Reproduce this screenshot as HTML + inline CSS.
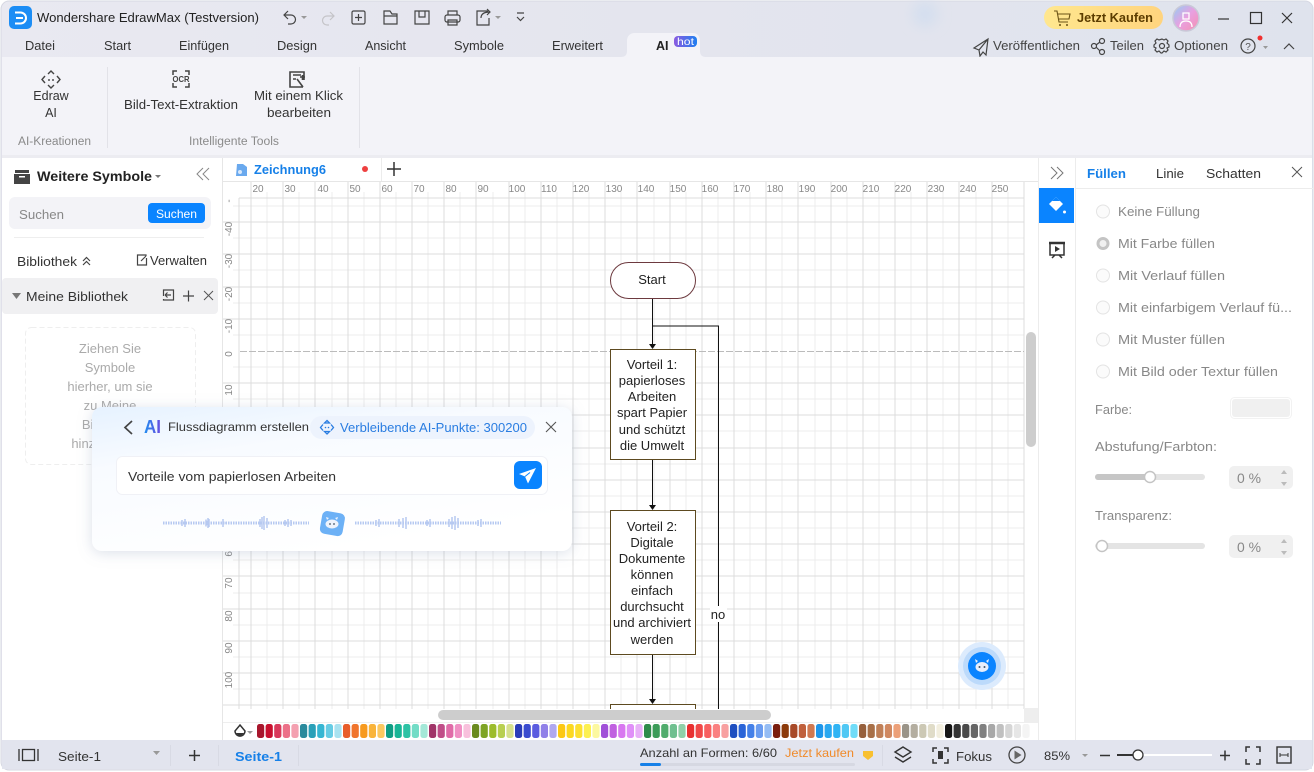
<!DOCTYPE html>
<html lang="de"><head><meta charset="utf-8"><title>Wondershare EdrawMax</title>
<style>
html,body{margin:0;padding:0;background:#fff;width:1314px;height:772px;overflow:hidden}
svg{display:block;font-family:"Liberation Sans",sans-serif}
.i{fill:none;stroke:#444;stroke-width:1.2}
.g{fill:#888}
.c{text-anchor:middle}
#pal rect{rx:2.5px;width:7.2px}
</style></head><body>
<svg width="1314" height="772" viewBox="0 0 1314 772" xmlns="http://www.w3.org/2000/svg">
<defs>
<linearGradient id="tb" x1="0" y1="0" x2="1" y2="0"><stop offset="0" stop-color="#e9e9f1"/><stop offset=".5" stop-color="#e4e5ee"/><stop offset="1" stop-color="#dfe3ed"/></linearGradient>
<linearGradient id="buy" x1="0" y1="0" x2="1" y2="0"><stop offset="0" stop-color="#ffe78f"/><stop offset="1" stop-color="#ffd47e"/></linearGradient>
<linearGradient id="hot" x1="0" y1="0" x2="1" y2="0"><stop offset="0" stop-color="#8b5be0"/><stop offset="1" stop-color="#1f7ff0"/></linearGradient>
<linearGradient id="av" x1="0" y1="0" x2="1" y2="1"><stop offset="0" stop-color="#8fd0f5"/><stop offset=".5" stop-color="#e8a0e0"/><stop offset="1" stop-color="#f590b0"/></linearGradient>
<linearGradient id="dlg" x1="0" y1="0" x2=".5" y2="1"><stop offset="0" stop-color="#e6f2ff"/><stop offset=".35" stop-color="#f8fbff"/><stop offset="1" stop-color="#ffffff"/></linearGradient>
<linearGradient id="ai" x1="0" y1="0" x2="1" y2="0"><stop offset="0" stop-color="#1f8ff0"/><stop offset="1" stop-color="#6a4be0"/></linearGradient>
<filter id="sh" x="-10%" y="-20%" width="120%" height="140%"><feDropShadow dx="0" dy="2" stdDeviation="7" flood-color="#8090b0" flood-opacity=".28"/></filter>
<filter id="bl" x="-100%" y="-100%" width="300%" height="300%"><feGaussianBlur stdDeviation="6"/></filter>
</defs>

<!-- window -->
<rect width="1314" height="772" fill="#fff"/>
<rect x="1" y="1" width="1312" height="769" rx="8" fill="url(#tb)" stroke="#d6d8e2"/>
<ellipse cx="925" cy="14" rx="13" ry="13" fill="#d5dfef" filter="url(#bl)"/>

<!-- title bar -->
<rect x="9" y="6" width="23" height="23" rx="5" fill="#1c8df5"/>
<path d="M15 12.500h5.500a5.500 5.500 0 0 1 0 11H15M16 18h7" fill="none" stroke="#fff" stroke-width="2"/>
<text x="37" y="22" font-size="13" fill="#222" textLength="222" lengthAdjust="spacingAndGlyphs">Wondershare EdrawMax (Testversion)</text>
<path class="i" d="M288 11l-4 4 4 4M284 15h7a4.500 4.500 0 0 1 0 9h-3"/>
<path d="M301 16h6l-3 3z" fill="#999"/>
<path class="i" style="stroke:#c4c4c8" d="M330 12l4 4-4 4M334 16h-7a4.500 4.500 0 0 0 0 9h2" />
<rect class="i" x="352" y="11" width="13" height="13" rx="1.500"/><path class="i" d="M358.500 14v7M355 17.500h7"/>
<path class="i" d="M384 24V11h6l2 3h5v10zM384 16h13" />
<path class="i" d="M415 11h14v13h-14zM419 11v6h6v-6"/>
<rect class="i" x="445" y="15" width="15" height="7" rx="2"/><path class="i" d="M448 15v-4h9v4M448 20h9v5h-9z"/>
<path class="i" d="M488 11h-11v14h12v-7M481 18c0-4 3-6 9-6M487 9l3 3-3 3"/>
<path d="M495 16h6l-3 3z" fill="#999"/>
<path class="i" d="M517 13h7M517 17l3.500 3.500 3.500-3.500" />

<rect x="1044" y="6" width="119" height="23" rx="11.500" fill="url(#buy)"/>
<path d="M1054 11h3l2 11h9M1058 14h12l-1 5h-10" fill="none" stroke="#6b5316" stroke-width="1.100"/><circle cx="1060" cy="25" r="1" fill="#6b5316"/><circle cx="1067" cy="25" r="1" fill="#6b5316"/>
<text x="1077" y="22" font-size="12.500" font-weight="700" fill="#5c3d00" textLength="76" lengthAdjust="spacingAndGlyphs">Jetzt Kaufen</text>
<circle cx="1186" cy="18" r="13" fill="url(#av)" stroke="#c9c9d8" stroke-width="1.500"/>
<path d="M1183 13h6v6h-6zM1180 27c0-5 3-6 6-6s6 1 6 6" fill="none" stroke="#fff" stroke-width="1.300"/>
<path d="M1218 19h11" stroke="#333" stroke-width="1.200"/>
<rect x="1250.500" y="12.500" width="11" height="11" fill="none" stroke="#333" stroke-width="1.200"/>
<path d="M1282 13l10 10M1292 13l-10 10" stroke="#333" stroke-width="1.200"/>

<!-- menu -->
<g font-size="12.500" fill="#333">
<text x="25" y="50" textLength="30" lengthAdjust="spacingAndGlyphs">Datei</text>
<text x="104" y="50" textLength="27" lengthAdjust="spacingAndGlyphs">Start</text>
<text x="179" y="50" textLength="50" lengthAdjust="spacingAndGlyphs">Einfügen</text>
<text x="277" y="50" textLength="40" lengthAdjust="spacingAndGlyphs">Design</text>
<text x="365" y="50" textLength="41" lengthAdjust="spacingAndGlyphs">Ansicht</text>
<text x="454" y="50" textLength="50" lengthAdjust="spacingAndGlyphs">Symbole</text>
<text x="552" y="50" textLength="51" lengthAdjust="spacingAndGlyphs">Erweitert</text>
</g>
<path d="M621 57c4 0 6-2 6-6V41c0-5 3-8 8-8h58c4 0 7 3 7 8v10c0 4 2 6 6 6z" fill="#f3f3f8"/>
<text x="656" y="50" font-size="12.500" font-weight="700" fill="#222">AI</text>
<rect x="674" y="36" width="23" height="11" rx="4" fill="url(#hot)"/>
<text x="677" y="45" font-size="10" fill="#fff" textLength="17" lengthAdjust="spacingAndGlyphs">hot</text>
<g font-size="12.500" fill="#444">
<text x="993" y="50" textLength="87" lengthAdjust="spacingAndGlyphs">Veröffentlichen</text>
<text x="1110" y="50" textLength="34" lengthAdjust="spacingAndGlyphs">Teilen</text>
<text x="1174" y="50" textLength="54" lengthAdjust="spacingAndGlyphs">Optionen</text>
</g>
<path class="i" d="M988 39l-14 9 5 2 1 6 3-4 3 3zM979 50l9-11"/>
<circle class="i" cx="1094" cy="46" r="2.500"/><circle class="i" cx="1102" cy="41" r="2.500"/><circle class="i" cx="1102" cy="52" r="2.500"/><path class="i" d="M1096 45l4-3M1096 47l4 4"/>
<circle class="i" cx="1162" cy="46" r="2.500"/><path class="i" d="M1162 39l2 1 2-1 2 2-1 2 2 2v2l-2 1 1 2-2 2-2-1-2 2h-1l-2-2-2 1-2-2 1-2-2-1v-2l2-2-1-2 2-2 2 1z"/>
<circle class="i" cx="1248" cy="46" r="7"/><text x="1248" y="50" font-size="10" class="c" fill="#555">?</text>
<circle cx="1260" cy="38" r="2.500" fill="#f03030"/><path d="M1263 46h5l-2.500 3z" fill="#999"/>
<path class="i" d="M1284 49l5-5 5 5"/>

<!-- ribbon -->
<rect x="2" y="57" width="1310" height="98" fill="#f3f3f8"/>
<rect x="2" y="155" width="1310" height="3" fill="#ececf1"/>
<path d="M107.500 67v81M359.500 67v81" stroke="#e2e2e8"/>
<g stroke="#444" stroke-width="1.400" fill="none">
<path d="M48 74l3-3 3 3M48 85l3 3 3-3M45 76l-3 3.500 3 3.500M57 76l3 3.500-3 3.500"/>
<path d="M49 79v2M53 79v2"/>
<path d="M173 75v-4h4M185 71h4v4M189 83v4h-4M177 87h-4v-4" stroke-width="1.500"/>
<path d="M303 87h-13V72h14v8M293 75h8M293 79h3M297 79l6 8M300 77h5M302.500 75v5" stroke-width="1.600"/>
</g>
<text x="172.500" y="82" font-size="8.500" font-weight="700" fill="#444" textLength="17" lengthAdjust="spacingAndGlyphs">OCR</text>
<g font-size="12.500" fill="#333">
<text x="51" y="100" class="c">Edraw</text>
<text x="51" y="117" class="c">AI</text>
<text x="124" y="109" textLength="114" lengthAdjust="spacingAndGlyphs">Bild-Text-Extraktion</text>
<text x="254" y="100" textLength="89" lengthAdjust="spacingAndGlyphs">Mit einem Klick</text>
<text x="267" y="117" textLength="64" lengthAdjust="spacingAndGlyphs">bearbeiten</text>
</g>
<text x="18" y="145" font-size="11.500" fill="#8a8a8a" textLength="73" lengthAdjust="spacingAndGlyphs">AI-Kreationen</text>
<text x="189" y="145" font-size="11.500" fill="#8a8a8a" textLength="90" lengthAdjust="spacingAndGlyphs">Intelligente Tools</text>

<!-- main area -->
<rect x="2" y="158" width="1310" height="582" fill="#fff"/>

<!-- canvas grid -->
<path stroke="#ececec" fill="none" shape-rendering="crispEdges" d="M267 192V709M299 192V709M332 192V709M364 192V709M396 192V709M428 192V709M460 192V709M493 192V709M525 192V709M557 192V709M589 192V709M621 192V709M654 192V709M686 192V709M718 192V709M750 192V709M782 192V709M815 192V709M847 192V709M879 192V709M911 192V709M943 192V709M976 192V709M1008 192V709M233 206H1024M233 238H1024M233 270H1024M233 303H1024M233 335H1024M233 367H1024M233 399H1024M233 431H1024M233 464H1024M233 496H1024M233 528H1024M233 560H1024M233 593H1024M233 625H1024M233 657H1024M233 689H1024"/>
<path stroke="#dcdcdc" fill="none" shape-rendering="crispEdges" d="M251 182V709M283 182V709M315 182V709M348 182V709M380 182V709M412 182V709M444 182V709M476 182V709M509 182V709M541 182V709M573 182V709M605 182V709M637 182V709M670 182V709M702 182V709M734 182V709M766 182V709M798 182V709M831 182V709M863 182V709M895 182V709M927 182V709M959 182V709M992 182V709M1024 182V709M239 198V709M222 222H1024M222 254H1024M222 287H1024M222 319H1024M222 383H1024M222 415H1024M222 448H1024M222 480H1024M222 512H1024M222 544H1024M222 576H1024M222 609H1024M222 641H1024M222 673H1024M222 705H1024M239 198H1024"/>
<path stroke="#bbb" stroke-dasharray="7 2" d="M240 351.500H1024"/>
<path stroke="#e6e6e6" d="M222 181.500H1038M222.500 158V740"/>
<path stroke="#ececec" d="M381.500 158v23"/>

<!-- ruler labels -->
<g font-size="10" fill="#888">
<text x="258" y="192" class="c">20</text><text x="290" y="192" class="c">30</text><text x="323" y="192" class="c">40</text><text x="355" y="192" class="c">50</text><text x="387" y="192" class="c">60</text><text x="419" y="192" class="c">70</text><text x="451" y="192" class="c">80</text><text x="483" y="192" class="c">90</text><text x="517" y="192" class="c">100</text><text x="549" y="192" class="c">110</text><text x="581" y="192" class="c">120</text><text x="614" y="192" class="c">130</text><text x="646" y="192" class="c">140</text><text x="678" y="192" class="c">150</text><text x="710" y="192" class="c">160</text><text x="742" y="192" class="c">170</text><text x="775" y="192" class="c">180</text><text x="807" y="192" class="c">190</text><text x="839" y="192" class="c">200</text><text x="871" y="192" class="c">210</text><text x="903" y="192" class="c">220</text><text x="936" y="192" class="c">230</text><text x="968" y="192" class="c">240</text><text x="1000" y="192" class="c">250</text>
<text transform="translate(232 201) rotate(-90)" class="c">-</text>
<text transform="translate(232 229) rotate(-90)" class="c">-40</text><text transform="translate(232 261) rotate(-90)" class="c">-30</text><text transform="translate(232 294) rotate(-90)" class="c">-20</text><text transform="translate(232 326) rotate(-90)" class="c">-10</text><text transform="translate(232 354) rotate(-90)" class="c">0</text><text transform="translate(232 390) rotate(-90)" class="c">10</text><text transform="translate(232 422) rotate(-90)" class="c">20</text><text transform="translate(232 455) rotate(-90)" class="c">30</text><text transform="translate(232 487) rotate(-90)" class="c">40</text><text transform="translate(232 519) rotate(-90)" class="c">50</text><text transform="translate(232 551) rotate(-90)" class="c">60</text><text transform="translate(232 583) rotate(-90)" class="c">70</text><text transform="translate(232 616) rotate(-90)" class="c">80</text><text transform="translate(232 648) rotate(-90)" class="c">90</text><text transform="translate(232 680) rotate(-90)" class="c">100</text>
</g>

<!-- tab -->
<path d="M237 164h6l4 3v9h-11z" fill="#6aa9ee"/><circle cx="240" cy="172" r="2" fill="#d8e8fb"/>
<text x="254" y="174" font-size="13" font-weight="700" fill="#1680e8" textLength="72" lengthAdjust="spacingAndGlyphs">Zeichnung6</text>
<circle cx="365" cy="169" r="3" fill="#ee4040"/>
<path d="M387 169h14M394 162v14" stroke="#333" stroke-width="1.500"/>

<!-- flow -->
<g stroke="#111" stroke-width="1" fill="none" shape-rendering="crispEdges">
<path d="M652.500 298V345M652.500 326H718.500V709M652.500 459V506M652.500 654V700"/>
</g>
<path d="M649 344h7l-3.500 5zM649 505h7l-3.500 5zM649 699h7l-3.500 5z" fill="#111"/>
<rect x="610.500" y="262.500" width="85" height="36" rx="18" fill="#fff" stroke="#6d3a3f"/>
<rect x="610.500" y="349.500" width="85" height="110" fill="#fff" stroke="#5d4a20"/>
<rect x="610.500" y="510.500" width="85" height="144" fill="#fff" stroke="#5d4a20"/>
<rect x="610.500" y="704.500" width="85" height="10" fill="#fff" stroke="#5d4a20"/>
<rect x="710" y="606" width="17" height="16" fill="#fff"/>
<g font-size="13" fill="#222">
<text x="652" y="284" class="c">Start</text>
<text x="652" y="369" class="c">Vorteil 1:</text><text x="652" y="385" class="c">papierloses</text><text x="652" y="401" class="c">Arbeiten</text><text x="652" y="417" class="c">spart Papier</text><text x="652" y="434" class="c">und schützt</text><text x="652" y="450" class="c">die Umwelt</text>
<text x="652" y="531" class="c">Vorteil 2:</text><text x="652" y="547" class="c">Digitale</text><text x="652" y="563" class="c">Dokumente</text><text x="652" y="579" class="c">können</text><text x="652" y="595" class="c">einfach</text><text x="652" y="611" class="c">durchsucht</text><text x="652" y="627" class="c">und archiviert</text><text x="652" y="644" class="c">werden</text>
<text x="718" y="619" class="c">no</text>
</g>

<!-- scrollbars / palette -->
<rect x="223" y="709" width="815" height="13" fill="#fff"/>
<rect x="438" y="710" width="333" height="10" rx="5" fill="#cdcdcd"/>
<rect x="1025" y="182" width="13" height="527" fill="#fff"/>
<rect x="1026" y="332" width="10" height="115" rx="5" fill="#cdcdcd"/>
<rect x="1024" y="708" width="14" height="14" fill="#eee"/>
<rect x="223" y="722" width="815" height="18" fill="#fff"/>
<path d="M223 722.500h815" stroke="#eee"/>
<path d="M240 725l5 6a5 5 0 0 1-10 0z" fill="#fff" stroke="#333" stroke-width="1.500"/><path d="M236 733h8l-4 4z" fill="#333"/>
<path d="M247 731h6l-3 3z" fill="#999"/>
<g id="pal">
<g><rect x="257" y="724" width="7" height="14" rx="2" fill="#a8162c"/><rect x="265.600" y="724" width="7" height="14" rx="2" fill="#c8102e"/><rect x="274.200" y="724" width="7" height="14" rx="2" fill="#d9395a"/><rect x="282.800" y="724" width="7" height="14" rx="2" fill="#ec7088"/><rect x="291.400" y="724" width="7" height="14" rx="2" fill="#f4a0b0"/></g>
<g><rect x="300" y="724" width="7" height="14" rx="2" fill="#2a8a9c"/><rect x="308.600" y="724" width="7" height="14" rx="2" fill="#2aa0b8"/><rect x="317.200" y="724" width="7" height="14" rx="2" fill="#36b6d2"/><rect x="325.800" y="724" width="7" height="14" rx="2" fill="#66cce4"/><rect x="334.400" y="724" width="7" height="14" rx="2" fill="#a8e2f0"/></g>
<g><rect x="343" y="724" width="7" height="14" rx="2" fill="#e85d2a"/><rect x="351.600" y="724" width="7" height="14" rx="2" fill="#f0742c"/><rect x="360.200" y="724" width="7" height="14" rx="2" fill="#f79a1e"/><rect x="368.800" y="724" width="7" height="14" rx="2" fill="#f9b43a"/><rect x="377.400" y="724" width="7" height="14" rx="2" fill="#fbc860"/></g>
<g><rect x="386" y="724" width="7" height="14" rx="2" fill="#0f9d84"/><rect x="394.600" y="724" width="7" height="14" rx="2" fill="#18b596"/><rect x="403.200" y="724" width="7" height="14" rx="2" fill="#2cc2a4"/><rect x="411.800" y="724" width="7" height="14" rx="2" fill="#72dcc6"/><rect x="420.400" y="724" width="7" height="14" rx="2" fill="#a4e8d8"/></g>
<g><rect x="429" y="724" width="7" height="14" rx="2" fill="#a03468"/><rect x="437.600" y="724" width="7" height="14" rx="2" fill="#c04e88"/><rect x="446.200" y="724" width="7" height="14" rx="2" fill="#e06ca8"/><rect x="454.800" y="724" width="7" height="14" rx="2" fill="#f090c4"/><rect x="463.400" y="724" width="7" height="14" rx="2" fill="#f8c0dc"/></g>
<g><rect x="472" y="724" width="7" height="14" rx="2" fill="#6a8a1e"/><rect x="480.600" y="724" width="7" height="14" rx="2" fill="#7ea424"/><rect x="489.200" y="724" width="7" height="14" rx="2" fill="#9cbc2c"/><rect x="497.800" y="724" width="7" height="14" rx="2" fill="#b8cf50"/><rect x="506.400" y="724" width="7" height="14" rx="2" fill="#d6e08c"/></g>
<g><rect x="515" y="724" width="7" height="14" rx="2" fill="#2a3cb8"/><rect x="523.600" y="724" width="7" height="14" rx="2" fill="#3a4ccf"/><rect x="532.200" y="724" width="7" height="14" rx="2" fill="#5a5ce0"/><rect x="540.800" y="724" width="7" height="14" rx="2" fill="#9080e8"/><rect x="549.400" y="724" width="7" height="14" rx="2" fill="#b0a8f0"/></g>
<g><rect x="558" y="724" width="7" height="14" rx="2" fill="#fcc814"/><rect x="566.600" y="724" width="7" height="14" rx="2" fill="#fcd820"/><rect x="575.200" y="724" width="7" height="14" rx="2" fill="#fce030"/><rect x="583.800" y="724" width="7" height="14" rx="2" fill="#fcf050"/><rect x="592.400" y="724" width="7" height="14" rx="2" fill="#fcf8a0"/></g>
<g><rect x="601" y="724" width="7" height="14" rx="2" fill="#a050d8"/><rect x="609.600" y="724" width="7" height="14" rx="2" fill="#c060e0"/><rect x="618.200" y="724" width="7" height="14" rx="2" fill="#d878f0"/><rect x="626.800" y="724" width="7" height="14" rx="2" fill="#e090f8"/><rect x="635.400" y="724" width="7" height="14" rx="2" fill="#e8b0f8"/></g>
<g><rect x="644" y="724" width="7" height="14" rx="2" fill="#2e8b4a"/><rect x="652.600" y="724" width="7" height="14" rx="2" fill="#3c9c58"/><rect x="661.200" y="724" width="7" height="14" rx="2" fill="#50ac6c"/><rect x="669.800" y="724" width="7" height="14" rx="2" fill="#70c090"/><rect x="678.400" y="724" width="7" height="14" rx="2" fill="#90d0a8"/></g>
<g><rect x="687" y="724" width="7" height="14" rx="2" fill="#e83030"/><rect x="695.600" y="724" width="7" height="14" rx="2" fill="#f04848"/><rect x="704.200" y="724" width="7" height="14" rx="2" fill="#f86060"/><rect x="712.800" y="724" width="7" height="14" rx="2" fill="#fa8080"/><rect x="721.400" y="724" width="7" height="14" rx="2" fill="#f8a0a0"/></g>
<g><rect x="730" y="724" width="7" height="14" rx="2" fill="#1e4fc0"/><rect x="738.600" y="724" width="7" height="14" rx="2" fill="#2a64d8"/><rect x="747.200" y="724" width="7" height="14" rx="2" fill="#4480e8"/><rect x="755.800" y="724" width="7" height="14" rx="2" fill="#6a9cf0"/><rect x="764.400" y="724" width="7" height="14" rx="2" fill="#94bcf4"/></g>
<g><rect x="773" y="724" width="7" height="14" rx="2" fill="#7a1e0e"/><rect x="781.600" y="724" width="7" height="14" rx="2" fill="#8c3a0a"/><rect x="790.200" y="724" width="7" height="14" rx="2" fill="#a84a28"/><rect x="798.800" y="724" width="7" height="14" rx="2" fill="#c0603c"/><rect x="807.400" y="724" width="7" height="14" rx="2" fill="#d07850"/></g>
<g><rect x="816" y="724" width="7" height="14" rx="2" fill="#1e96ea"/><rect x="824.600" y="724" width="7" height="14" rx="2" fill="#2aa8f0"/><rect x="833.200" y="724" width="7" height="14" rx="2" fill="#30b4f4"/><rect x="841.800" y="724" width="7" height="14" rx="2" fill="#50c8f4"/><rect x="850.400" y="724" width="7" height="14" rx="2" fill="#70dcf8"/></g>
<g><rect x="859" y="724" width="7" height="14" rx="2" fill="#96603c"/><rect x="867.600" y="724" width="7" height="14" rx="2" fill="#a87048"/><rect x="876.200" y="724" width="7" height="14" rx="2" fill="#c08058"/><rect x="884.800" y="724" width="7" height="14" rx="2" fill="#d08860"/><rect x="893.400" y="724" width="7" height="14" rx="2" fill="#eca078"/><rect x="902" y="724" width="7" height="14" rx="2" fill="#9a9488"/><rect x="910.600" y="724" width="7" height="14" rx="2" fill="#b4aea0"/><rect x="919.200" y="724" width="7" height="14" rx="2" fill="#ccc8b4"/><rect x="927.800" y="724" width="7" height="14" rx="2" fill="#e0dcc8"/><rect x="936.400" y="724" width="7" height="14" rx="2" fill="#f2eede"/></g>
<g><rect x="945" y="724" width="7" height="14" rx="2" fill="#151515"/><rect x="953.600" y="724" width="7" height="14" rx="2" fill="#333"/><rect x="962.200" y="724" width="7" height="14" rx="2" fill="#4a4a4a"/><rect x="970.800" y="724" width="7" height="14" rx="2" fill="#666"/><rect x="979.400" y="724" width="7" height="14" rx="2" fill="#808080"/><rect x="988" y="724" width="7" height="14" rx="2" fill="#a8a8a8"/><rect x="996.600" y="724" width="7" height="14" rx="2" fill="#c0c0c0"/><rect x="1005.200" y="724" width="7" height="14" rx="2" fill="#d6d6d6"/><rect x="1013.800" y="724" width="7" height="14" rx="2" fill="#e6e6e6"/><rect x="1022.400" y="724" width="7" height="14" rx="2" fill="#f4f4f4"/></g>
</g>

<!-- FAB -->
<circle cx="982" cy="666" r="24" fill="#dcebfd"/><circle cx="982" cy="666" r="19" fill="#bcdafb"/><circle cx="982" cy="666" r="14" fill="#0a84ff"/>
<ellipse cx="982" cy="667" rx="6.500" ry="5" fill="#e8eefb"/><path d="M976 663l-1-4 3 2M988 663l1-4-3 2" fill="#e8eefb"/><circle cx="979.500" cy="667" r="1" fill="#456"/><circle cx="984.500" cy="667" r="1" fill="#456"/>

<!-- left panel -->
<path d="M15 170h14v3H15zM14 174h16v10H14z" fill="#444"/><rect x="19" y="176" width="6" height="1.500" fill="#fff"/>
<text x="37" y="181" font-size="14" font-weight="700" fill="#222" textLength="115" lengthAdjust="spacingAndGlyphs">Weitere Symbole</text>
<path d="M155 175h6l-3 3z" fill="#777"/>
<path d="M203 168l-6 6 6 6M209 168l-6 6 6 6" fill="none" stroke="#888"/>
<rect x="9" y="197" width="202" height="32" rx="6" fill="#f3f3f7"/>
<text x="19" y="219" font-size="13" fill="#888" textLength="45" lengthAdjust="spacingAndGlyphs">Suchen</text>
<rect x="148" y="203" width="57" height="20" rx="4" fill="#0a84ff"/>
<text x="156" y="218" font-size="12" fill="#fff" textLength="41" lengthAdjust="spacingAndGlyphs">Suchen</text>
<path d="M14 237.500h190" stroke="#eee"/>
<text x="17" y="266" font-size="13" fill="#333" textLength="60" lengthAdjust="spacingAndGlyphs">Bibliothek</text>
<path class="i" d="M83 261l3.500-3.500L90 261M83 265l3.500-3.500L90 265"/>
<path class="i" d="M146 256v-1h-8.500v10h9v-7M141 261l5-5"/>
<text x="150" y="265" font-size="12.500" fill="#333" textLength="57" lengthAdjust="spacingAndGlyphs">Verwalten</text>
<rect x="2" y="278" width="216" height="36" rx="4" fill="#f0f0f2"/>
<path d="M12 293h9l-4.500 6z" fill="#777"/>
<text x="26" y="301" font-size="13" fill="#333" textLength="102" lengthAdjust="spacingAndGlyphs">Meine Bibliothek</text>
<path class="i" d="M163.500 296v-6h10v10h-10v-1M165 295h6M165 295l2.500-2.500M165 295l2.500 2.500"/>
<path d="M183 296h11M188.500 290.500v11" stroke="#444" stroke-width="1.200"/>
<path d="M204 291l9 9M213 291l-9 9" stroke="#555" stroke-width="1"/>
<rect x="25.500" y="327.500" width="170" height="137" rx="6" fill="none" stroke="#eee" stroke-dasharray="5 3"/>
<g font-size="13" fill="#aaa">
<text x="110" y="353" class="c">Ziehen Sie</text><text x="110" y="372" class="c">Symbole</text><text x="110" y="391" class="c">hierher, um sie</text><text x="110" y="410" class="c">zu Meine</text><text x="110" y="429" class="c">Bibliothek</text><text x="110" y="448" class="c">hinzuzufügen</text>
</g>

<!-- right panel -->
<path d="M1038.500 158V740M1075.500 158V740" stroke="#ececec"/>
<path d="M1075 188.500h239" stroke="#ececec"/>
<path d="M1051 167l6 6-6 6M1057 167l6 6-6 6" fill="none" stroke="#777"/>
<rect x="1039" y="188" width="35" height="35" fill="#0a84ff"/>
<path d="M1056 197l7 7-7 7-7-7z" fill="#fff"/><path d="M1052 201l4-4 4 4" fill="#0a84ff"/><circle cx="1064.500" cy="212" r="1.500" fill="#fff"/>
<path d="M1049 243h16" stroke="#333" stroke-width="2.500"/><path d="M1050 243v12h14v-12M1052 258l3-3M1062 258l-3-3" fill="none" stroke="#333" stroke-width="1.500"/><path d="M1055 246l5 3-5 3z" fill="#333"/>
<text x="1087" y="178" font-size="13" font-weight="700" fill="#1680e8" textLength="39" lengthAdjust="spacingAndGlyphs">Füllen</text>
<text x="1156" y="178" font-size="13" fill="#333" textLength="28" lengthAdjust="spacingAndGlyphs">Linie</text>
<text x="1206" y="178" font-size="13" fill="#333" textLength="55" lengthAdjust="spacingAndGlyphs">Schatten</text>
<path d="M1292 167l10 10M1302 167l-10 10" stroke="#555"/>
<g fill="#fbfbfb" stroke="#e4e4e4"><circle cx="1103" cy="211.500" r="6.500"/><circle cx="1103" cy="275.500" r="6.500"/><circle cx="1103" cy="307.500" r="6.500"/><circle cx="1103" cy="339.500" r="6.500"/><circle cx="1103" cy="371.500" r="6.500"/></g>
<circle cx="1103" cy="243.500" r="5" fill="#f0f0f0" stroke="#c4c4c4" stroke-width="3"/>
<g font-size="13" fill="#888">
<text x="1118" y="216" textLength="82" lengthAdjust="spacingAndGlyphs">Keine Füllung</text>
<text x="1118" y="248" textLength="97" lengthAdjust="spacingAndGlyphs">Mit Farbe füllen</text>
<text x="1118" y="280" textLength="107" lengthAdjust="spacingAndGlyphs">Mit Verlauf füllen</text>
<text x="1118" y="312" textLength="174" lengthAdjust="spacingAndGlyphs">Mit einfarbigem Verlauf fü...</text>
<text x="1118" y="344" textLength="107" lengthAdjust="spacingAndGlyphs">Mit Muster füllen</text>
<text x="1118" y="376" textLength="160" lengthAdjust="spacingAndGlyphs">Mit Bild oder Textur füllen</text>
<text x="1095" y="414" textLength="37" lengthAdjust="spacingAndGlyphs">Farbe:</text>
<text x="1095" y="451" textLength="122" lengthAdjust="spacingAndGlyphs">Abstufung/Farbton:</text>
<text x="1095" y="520" textLength="77" lengthAdjust="spacingAndGlyphs">Transparenz:</text>
</g>
<rect x="1230.500" y="397.500" width="61" height="21" rx="4" fill="#fff" stroke="#f2f2f2"/>
<rect x="1232" y="399" width="58" height="18" rx="3" fill="#f0f0f0"/>
<rect x="1095" y="474" width="110" height="6" rx="3" fill="#e4e4e4"/><rect x="1095" y="474" width="55" height="6" rx="3" fill="#c6c6c6"/>
<circle cx="1150" cy="477" r="5.500" fill="#fff" stroke="#c4c4c4" stroke-width="1.500"/>
<rect x="1229" y="466" width="64" height="23" rx="5" fill="#f0f0f0"/>
<text x="1237" y="483" font-size="14" fill="#888" textLength="24" lengthAdjust="spacingAndGlyphs">0 %</text>
<path d="M1281 474l3-4 3 4zM1281 482l3 4 3-4z" fill="#bbb"/>
<rect x="1095" y="543" width="110" height="6" rx="3" fill="#e4e4e4"/>
<circle cx="1102" cy="546" r="5.500" fill="#fff" stroke="#c4c4c4" stroke-width="1.500"/>
<rect x="1229" y="535" width="64" height="23" rx="5" fill="#f0f0f0"/>
<text x="1237" y="552" font-size="14" fill="#888" textLength="24" lengthAdjust="spacingAndGlyphs">0 %</text>
<path d="M1281 543l3-4 3 4zM1281 551l3 4 3-4z" fill="#bbb"/>

<!-- status bar -->
<rect x="2" y="740" width="1310" height="29" fill="#e2e4ee"/>
<path d="M19 749v12M38 749v12" stroke="#333" stroke-width="1.300"/><rect x="22.500" y="749.500" width="12" height="11" fill="none" stroke="#333" stroke-width="1.300"/>
<text x="58" y="761" font-size="12.500" fill="#333" textLength="43" lengthAdjust="spacingAndGlyphs">Seite-1</text>
<path d="M153 751h7l-3.500 4z" fill="#999"/>
<path d="M189 755.500h11M194.500 750v11" stroke="#333" stroke-width="1.500"/>
<path d="M170.500 745v21M218.500 745v21M298.500 745v21" stroke="#d8dae4"/>
<text x="235" y="761" font-size="13" font-weight="700" fill="#1680e8" textLength="47" lengthAdjust="spacingAndGlyphs">Seite-1</text>
<text x="640" y="757" font-size="12" fill="#333" textLength="137" lengthAdjust="spacingAndGlyphs">Anzahl an Formen: 6/60</text>
<text x="785" y="757" font-size="12" fill="#f08a2a" textLength="69" lengthAdjust="spacingAndGlyphs">Jetzt kaufen</text>
<path d="M863 751h10v5l-5 4-5-4z" fill="#f8c030"/>
<rect x="640" y="763" width="215" height="3" rx="1.500" fill="#d6d8e2"/><rect x="640" y="763" width="21" height="3" rx="1.500" fill="#1680e8"/>
<path d="M882.500 745v21" stroke="#d8dae4"/>
<path d="M903 747l8 5-8 5-8-5zM895 757l8 5 8-5" fill="none" stroke="#333" stroke-width="1.400"/>
<path d="M933 752v-4h4M944 748h4v4M948 759v4h-4M937 763h-4v-4" fill="none" stroke="#333" stroke-width="1.500"/><rect x="938" y="751" width="5" height="8" fill="#333"/>
<text x="956" y="761" font-size="12.500" fill="#333" textLength="36" lengthAdjust="spacingAndGlyphs">Fokus</text>
<circle cx="1017" cy="755" r="8" fill="none" stroke="#444" stroke-width="1.300"/><path d="M1014.500 750.500l7 4.500-7 4.500z" fill="#666"/>
<text x="1044" y="760" font-size="12" fill="#333" textLength="26" lengthAdjust="spacingAndGlyphs">85%</text>
<path d="M1082 754h6l-3 3z" fill="#999"/>
<path d="M1100 755.500h10" stroke="#333" stroke-width="1.500"/>
<path d="M1117 755h95" stroke="#fff" stroke-width="2"/><path d="M1117 755h21" stroke="#333" stroke-width="2"/>
<circle cx="1138" cy="755" r="5" fill="#fff" stroke="#333" stroke-width="1.300"/>
<path d="M1220 755.500h10M1225 750.500v10" stroke="#333" stroke-width="1.500"/>
<path d="M1246 752v-5h4M1256 747h4v5M1260 759v5h-4M1250 764h-4v-5" fill="none" stroke="#333" stroke-width="1.500"/>
<rect x="1277" y="747" width="14" height="16" fill="none" stroke="#333" stroke-width="1.400"/><path d="M1280 755h8M1280 753v4M1288 753v4" stroke="#333"/>

<!-- AI dialog -->
<rect x="92" y="407" width="480" height="144" rx="10" fill="url(#dlg)" filter="url(#sh)"/>
<path d="M132 421l-7 6.500 7 6.500" fill="none" stroke="#444" stroke-width="1.700"/>
<text x="144" y="433" font-size="18" font-weight="700" fill="url(#ai)" textLength="17" lengthAdjust="spacingAndGlyphs">AI</text>
<text x="168" y="431" font-size="12" fill="#333" textLength="141" lengthAdjust="spacingAndGlyphs">Flussdiagramm erstellen</text>
<rect x="310" y="416" width="225" height="23" rx="11.500" fill="#edf3fd"/>
<path d="M327 420.500l2.500 2.500h-5zM327 434l2.500-2.500h-5zM323 424.500l-2.500 3 2.500 3M331 424.500l2.500 3-2.500 3" fill="none" stroke="#2a7de1" stroke-width="1.300"/><circle cx="325.500" cy="427.500" r=".8" fill="#2a7de1"/><circle cx="328.500" cy="427.500" r=".8" fill="#2a7de1"/>
<text x="340" y="432" font-size="12.500" fill="#2a7de1" textLength="187" lengthAdjust="spacingAndGlyphs">Verbleibende AI-Punkte: 300200</text>
<path d="M546 422l10 10M556 422l-10 10" stroke="#555" stroke-width="1.100"/>
<rect x="116.500" y="456.500" width="431" height="38" rx="6" fill="#fff" stroke="#f0f1f6"/>
<text x="128" y="481" font-size="13" fill="#333" textLength="208" lengthAdjust="spacingAndGlyphs">Vorteile vom papierlosen Arbeiten</text>
<rect x="514" y="461" width="28" height="28" rx="6" fill="#0a84ff"/>
<path d="M536 468l-17 6 6 2.500 3 7z" fill="#fff"/><path d="M525 476.500l5-4" stroke="#0a84ff"/>
<g stroke="#b6c9f1" fill="none">
<path stroke-width="3" stroke-dasharray="1.500 1" d="M163 523H309M355 523H501"/>
<path stroke-width="1.500" d="M182 520v6M185 519v8M206 519.500v7M209 519v8M223 519v8M226 522v2M207 521v4M260 519v8M262 517v12M264 516v14M267 518v10M208 518v10M285 520v6M288 519v8M291 520v6M376 520v6M379 519v8M403 518v10M399 519v8M406 517v12M427 520v6M430 519v8M452 517v12M455 516v14M458 518v10M449 519v8M478 520v6M481 519v8"/>
</g>
<g transform="rotate(10 332 523)"><rect x="321" y="512" width="23" height="23" rx="5" fill="#6db1f6"/></g>
<ellipse cx="332" cy="524" rx="6.500" ry="4.500" fill="#eef3fc"/><path d="M327 520l-1-3 3 1M337 520l1-3-3 1" fill="#eef3fc"/><circle cx="330" cy="524" r=".9" fill="#456"/><circle cx="334" cy="524" r=".9" fill="#456"/>
</svg>
</body></html>
